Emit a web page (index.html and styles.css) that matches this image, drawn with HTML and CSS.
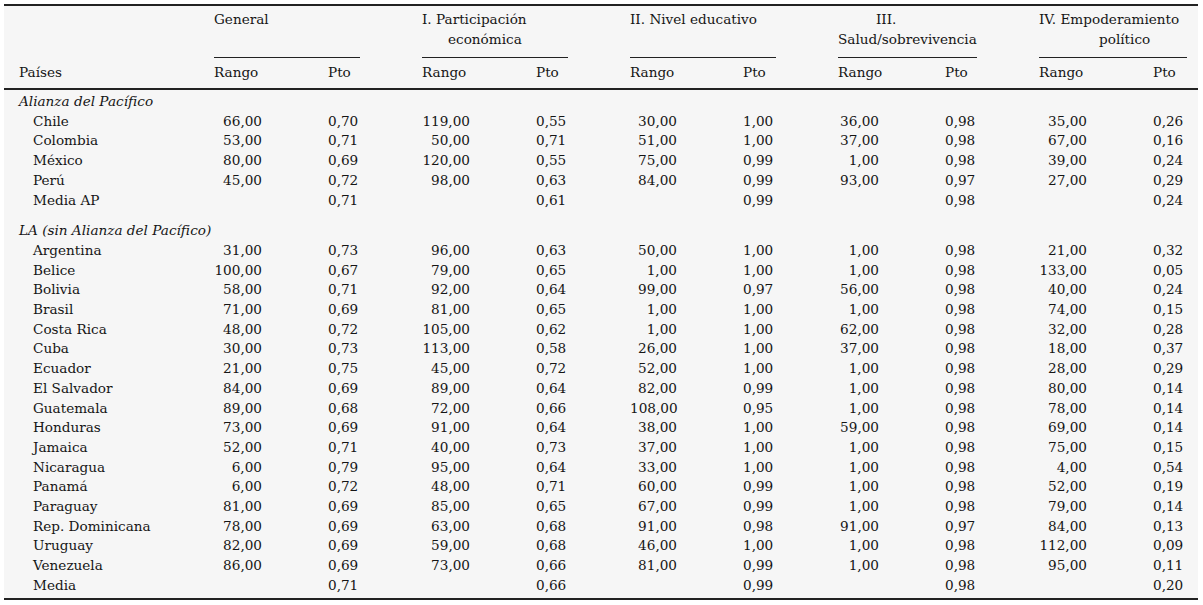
FILE: index.html
```html
<!DOCTYPE html>
<html lang="es">
<head>
<meta charset="utf-8">
<title>Índice de brecha de género</title>
<link rel="stylesheet" href="styles.css">
</head>
<body>
<div class="page">
  <div class="tbl">
    <div class="hcell"></div>
    <div class="grp"><span class="ln">General</span></div>
    <div class="grp"><span class="ln">I. Participación</span><span class="ln ind-26">económica</span></div>
    <div class="grp"><span class="ln">II. Nivel educativo</span></div>
    <div class="grp"><span class="ln ind-38">III.</span><span class="ln">Salud/sobrevivencia</span></div>
    <div class="grp grp-last"><span class="ln">IV. Empoderamiento</span><span class="ln ind-62">político</span></div>

    <div class="sub name-h">Países</div>
    <div class="sub">Rango</div><div class="sub">Pto</div>
    <div class="sub">Rango</div><div class="sub">Pto</div>
    <div class="sub">Rango</div><div class="sub">Pto</div>
    <div class="sub">Rango</div><div class="sub">Pto</div>
    <div class="sub">Rango</div><div class="sub">Pto</div>

    <div class="sec first">Alianza del Pacífico</div>

    <div class="name">Chile</div><div class="r">66,00</div><div class="p">0,70</div><div class="r">119,00</div><div class="p">0,55</div><div class="r">30,00</div><div class="p">1,00</div><div class="r">36,00</div><div class="p">0,98</div><div class="r">35,00</div><div class="p">0,26</div>
    <div class="name">Colombia</div><div class="r">53,00</div><div class="p">0,71</div><div class="r">50,00</div><div class="p">0,71</div><div class="r">51,00</div><div class="p">1,00</div><div class="r">37,00</div><div class="p">0,98</div><div class="r">67,00</div><div class="p">0,16</div>
    <div class="name">México</div><div class="r">80,00</div><div class="p">0,69</div><div class="r">120,00</div><div class="p">0,55</div><div class="r">75,00</div><div class="p">0,99</div><div class="r">1,00</div><div class="p">0,98</div><div class="r">39,00</div><div class="p">0,24</div>
    <div class="name">Perú</div><div class="r">45,00</div><div class="p">0,72</div><div class="r">98,00</div><div class="p">0,63</div><div class="r">84,00</div><div class="p">0,99</div><div class="r">93,00</div><div class="p">0,97</div><div class="r">27,00</div><div class="p">0,29</div>
    <div class="name">Media AP</div><div class="r"></div><div class="p">0,71</div><div class="r"></div><div class="p">0,61</div><div class="r"></div><div class="p">0,99</div><div class="r"></div><div class="p">0,98</div><div class="r"></div><div class="p">0,24</div>

    <div class="sec gap">LA (sin Alianza del Pacífico)</div>

    <div class="name">Argentina</div><div class="r">31,00</div><div class="p">0,73</div><div class="r">96,00</div><div class="p">0,63</div><div class="r">50,00</div><div class="p">1,00</div><div class="r">1,00</div><div class="p">0,98</div><div class="r">21,00</div><div class="p">0,32</div>
    <div class="name">Belice</div><div class="r">100,00</div><div class="p">0,67</div><div class="r">79,00</div><div class="p">0,65</div><div class="r">1,00</div><div class="p">1,00</div><div class="r">1,00</div><div class="p">0,98</div><div class="r">133,00</div><div class="p">0,05</div>
    <div class="name">Bolivia</div><div class="r">58,00</div><div class="p">0,71</div><div class="r">92,00</div><div class="p">0,64</div><div class="r">99,00</div><div class="p">0,97</div><div class="r">56,00</div><div class="p">0,98</div><div class="r">40,00</div><div class="p">0,24</div>
    <div class="name">Brasil</div><div class="r">71,00</div><div class="p">0,69</div><div class="r">81,00</div><div class="p">0,65</div><div class="r">1,00</div><div class="p">1,00</div><div class="r">1,00</div><div class="p">0,98</div><div class="r">74,00</div><div class="p">0,15</div>
    <div class="name">Costa Rica</div><div class="r">48,00</div><div class="p">0,72</div><div class="r">105,00</div><div class="p">0,62</div><div class="r">1,00</div><div class="p">1,00</div><div class="r">62,00</div><div class="p">0,98</div><div class="r">32,00</div><div class="p">0,28</div>
    <div class="name">Cuba</div><div class="r">30,00</div><div class="p">0,73</div><div class="r">113,00</div><div class="p">0,58</div><div class="r">26,00</div><div class="p">1,00</div><div class="r">37,00</div><div class="p">0,98</div><div class="r">18,00</div><div class="p">0,37</div>
    <div class="name">Ecuador</div><div class="r">21,00</div><div class="p">0,75</div><div class="r">45,00</div><div class="p">0,72</div><div class="r">52,00</div><div class="p">1,00</div><div class="r">1,00</div><div class="p">0,98</div><div class="r">28,00</div><div class="p">0,29</div>
    <div class="name">El Salvador</div><div class="r">84,00</div><div class="p">0,69</div><div class="r">89,00</div><div class="p">0,64</div><div class="r">82,00</div><div class="p">0,99</div><div class="r">1,00</div><div class="p">0,98</div><div class="r">80,00</div><div class="p">0,14</div>
    <div class="name">Guatemala</div><div class="r">89,00</div><div class="p">0,68</div><div class="r">72,00</div><div class="p">0,66</div><div class="r">108,00</div><div class="p">0,95</div><div class="r">1,00</div><div class="p">0,98</div><div class="r">78,00</div><div class="p">0,14</div>
    <div class="name">Honduras</div><div class="r">73,00</div><div class="p">0,69</div><div class="r">91,00</div><div class="p">0,64</div><div class="r">38,00</div><div class="p">1,00</div><div class="r">59,00</div><div class="p">0,98</div><div class="r">69,00</div><div class="p">0,14</div>
    <div class="name">Jamaica</div><div class="r">52,00</div><div class="p">0,71</div><div class="r">40,00</div><div class="p">0,73</div><div class="r">37,00</div><div class="p">1,00</div><div class="r">1,00</div><div class="p">0,98</div><div class="r">75,00</div><div class="p">0,15</div>
    <div class="name">Nicaragua</div><div class="r">6,00</div><div class="p">0,79</div><div class="r">95,00</div><div class="p">0,64</div><div class="r">33,00</div><div class="p">1,00</div><div class="r">1,00</div><div class="p">0,98</div><div class="r">4,00</div><div class="p">0,54</div>
    <div class="name">Panamá</div><div class="r">6,00</div><div class="p">0,72</div><div class="r">48,00</div><div class="p">0,71</div><div class="r">60,00</div><div class="p">0,99</div><div class="r">1,00</div><div class="p">0,98</div><div class="r">52,00</div><div class="p">0,19</div>
    <div class="name">Paraguay</div><div class="r">81,00</div><div class="p">0,69</div><div class="r">85,00</div><div class="p">0,65</div><div class="r">67,00</div><div class="p">0,99</div><div class="r">1,00</div><div class="p">0,98</div><div class="r">79,00</div><div class="p">0,14</div>
    <div class="name">Rep. Dominicana</div><div class="r">78,00</div><div class="p">0,69</div><div class="r">63,00</div><div class="p">0,68</div><div class="r">91,00</div><div class="p">0,98</div><div class="r">91,00</div><div class="p">0,97</div><div class="r">84,00</div><div class="p">0,13</div>
    <div class="name">Uruguay</div><div class="r">82,00</div><div class="p">0,69</div><div class="r">59,00</div><div class="p">0,68</div><div class="r">46,00</div><div class="p">1,00</div><div class="r">1,00</div><div class="p">0,98</div><div class="r">112,00</div><div class="p">0,09</div>
    <div class="name">Venezuela</div><div class="r">86,00</div><div class="p">0,69</div><div class="r">73,00</div><div class="p">0,66</div><div class="r">81,00</div><div class="p">0,99</div><div class="r">1,00</div><div class="p">0,98</div><div class="r">95,00</div><div class="p">0,11</div>
    <div class="name">Media</div><div class="r"></div><div class="p">0,71</div><div class="r"></div><div class="p">0,66</div><div class="r"></div><div class="p">0,99</div><div class="r"></div><div class="p">0,98</div><div class="r"></div><div class="p">0,20</div>
  </div>
</div>
</body>
</html>
```

FILE: styles.css
```css
html, body {
  margin: 0;
  padding: 0;
  background: #ffffff;
}

.page {
  padding: 4px;
}

.tbl {
  width: 1194px;
  box-sizing: border-box;
  display: grid;
  grid-template-columns: 210px 114px 94px 114px 94px 113px 95px 107px 94px 114px 45px;
  background: #f6f6f6;
  border-top: 2px solid #222222;
  border-bottom: 2px solid #222222;
  padding-bottom: 2px;
  font-family: "DejaVu Serif", serif;
  font-size: 13.6px;
  line-height: 19.7px;
  color: #151515;
}

.hcell {
  grid-column: 1;
}

.grp {
  grid-column: span 2;
  margin-right: 62px;
  padding: 3px 0 8px;
  border-bottom: 1px solid #222222;
  line-height: 20px;
  display: flex;
  flex-direction: column;
  align-items: flex-start;
}

.grp-last {
  margin-right: 11px;
}

.ln {
  display: block;
  white-space: nowrap;
}

.ind-26 { margin-left: 26px; }
.ind-38 { margin-left: 38px; }
.ind-62 { margin-left: 60px; }

.sub {
  padding: 4px 0 6px;
  line-height: 20px;
  border-bottom: 2px solid #222222;
  white-space: nowrap;
}

.name-h {
  padding-left: 15px;
}

.sec {
  grid-column: 1 / -1;
  padding-left: 15px;
  font-style: italic;
}

.sec.first {
  padding-top: 2px;
}

.sec.gap {
  padding-top: 11px;
}

.name {
  padding-left: 29px;
  white-space: nowrap;
}

.r {
  text-align: right;
  padding-right: 66px;
  white-space: nowrap;
}

.p {
  white-space: nowrap;
}
```
